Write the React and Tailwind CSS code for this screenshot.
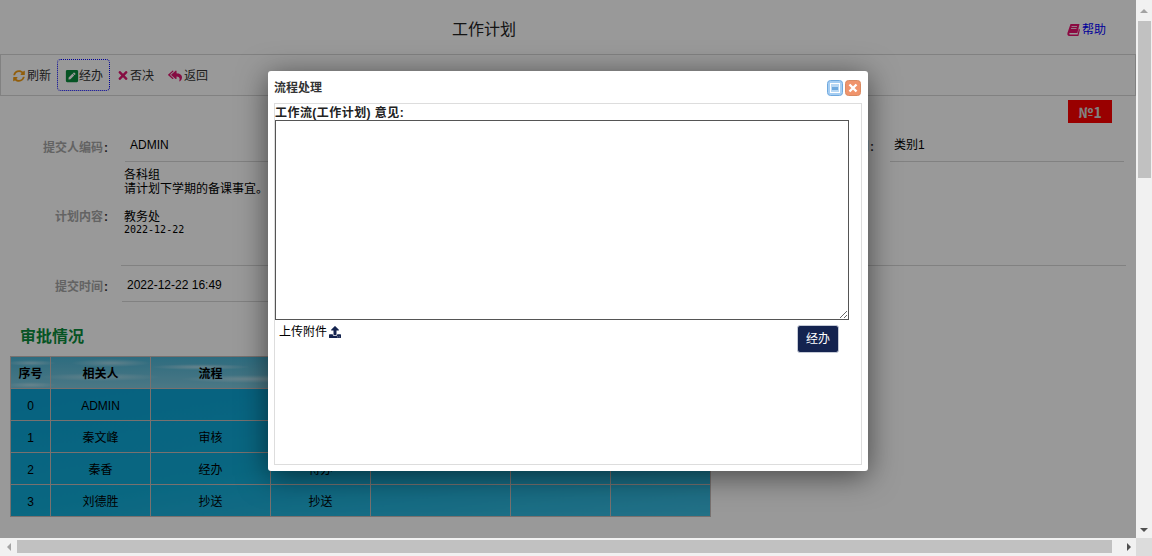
import { FaSyncAlt, FaPenSquare, FaTimes, FaReplyAll, FaUpload } from 'react-icons/fa';

const rows = [
  ['0', 'ADMIN', '', '', '', '', ''],
  ['1', '秦文峰', '审核', '审核', '', '', ''],
  ['2', '秦香', '经办', '待办', '', '', ''],
  ['3', '刘德胜', '抄送', '抄送', '', '', ''],
];

const heads = ['序号', '相关人', '流程', '状态', '时间', '意见', '附件'];
const widths = ['w-[40px]', 'w-[100px]', 'w-[120px]', 'w-[100px]', 'w-[140px]', 'w-[100px]', 'w-[100px]'];

function Label({ children, className = 'w-[108px]' }) {
  return (
    <span className={`${className} shrink-0 text-right text-xs font-bold text-[#a6a6a6]`}>
      {children}
      <span className="pl-[1px] text-[#333]">:</span>
    </span>
  );
}

function BookIcon() {
  return (
    <svg width="13" height="14" viewBox="0 0 13 14" className="text-[#e8126e]">
      <path
        fill="currentColor"
        d="M3.5 1 H12.5 L10.4 10 H3 C2 10 1.9 11.6 3 11.6 H10.6 L11.8 6 L13 6.5 L11.4 13 H2.4 C0.6 13 0 11.6 0.5 9.8 Z"
      />
      <path d="M4.6 3.5 H10 M4 5.5 H9.5" stroke="#fff" strokeWidth="0.8" />
    </svg>
  );
}

function ApprovalTable() {
  return (
    <table className="ml-[10px] w-[701px] table-fixed border-collapse border border-[#c9bdb9] text-xs text-black bg-[linear-gradient(170deg,#0aa0d4,#10acd8_55%,#3cbce0)]">
      <thead>
        <tr className="h-[32px] bg-[radial-gradient(ellipse_40px_4px_at_100px_6px,#ffffff70,transparent),radial-gradient(ellipse_50px_3px_at_190px_10px,#ffffff80,transparent),radial-gradient(ellipse_45px_4px_at_300px_5px,#ffffff70,transparent),radial-gradient(ellipse_60px_4px_at_90px_20px,#ffffff60,transparent),radial-gradient(ellipse_70px_4px_at_240px_22px,#ffffff70,transparent),radial-gradient(ellipse_60px_4px_at_420px_10px,#ffffff60,transparent),radial-gradient(ellipse_60px_4px_at_560px_22px,#ffffff60,transparent),radial-gradient(ellipse_25px_3px_at_20px_6px,#ffffff70,transparent),radial-gradient(ellipse_25px_3px_at_20px_28px,#ffffff60,transparent),linear-gradient(#4cb4d4,#80c8de)]">
          {heads.map((h, i) => (
            <th key={h} className={`${widths[i]} border border-[#c9bdb9] pt-[3px] font-bold`}>{h}</th>
          ))}
        </tr>
      </thead>
      <tbody>
        {rows.map((row) => (
          <tr key={row[0]} className="h-[32px]">
            {row.map((cell, i) => (
              <td key={i} className="border border-[#c9bdb9] pt-[2px] text-center">{cell}</td>
            ))}
          </tr>
        ))}
      </tbody>
    </table>
  );
}

function WindowButtons() {
  return (
    <div className="flex gap-[2px]">
      <svg width="16" height="16" viewBox="0 0 16 16">
        <rect x="0.5" y="0.5" width="15" height="15" rx="3" fill="#a5cdf2" stroke="#6fa9de" />
        <rect x="3.5" y="3.5" width="9" height="9" fill="#b9d8f4" stroke="#fff" />
        <rect x="5" y="7" width="6" height="3" fill="#6fa9de" />
      </svg>
      <svg width="16" height="16" viewBox="0 0 16 16">
        <rect x="0.5" y="0.5" width="15" height="15" rx="3" fill="#f0946c" stroke="#d98a62" />
        <path d="M4.5 4.5 L11.5 11.5 M11.5 4.5 L4.5 11.5" stroke="#fff" strokeWidth="2.4" />
      </svg>
    </div>
  );
}

function Modal() {
  return (
    <div className="absolute left-[268px] top-[71px] z-20 flex h-[400px] w-[600px] flex-col rounded-[3px] bg-white px-[6px] pb-[6px] text-xs shadow-[0_5px_30px_rgba(0,0,0,0.55)]">
      <div className="flex h-[32px] shrink-0 items-center justify-between pt-[1px] pr-[1px]">
        <span className="font-bold text-[#333]">流程处理</span>
        <WindowButtons />
      </div>
      <div className="flex-1 border border-[#dddddd]">
        <div className="h-[16px] pt-[2px] leading-[14px] font-bold text-[#222] tracking-[0.45px]">工作流(工作计划) 意见:</div>
        <textarea className="block h-[200px] w-[574px] resize border border-[#555] bg-white" />
        <div className="flex items-start justify-between pt-[5px] pr-[22px] pl-[4px]">
          <span className="flex items-center gap-[2px] leading-[14px] text-black">
            上传附件
            <FaUpload className="size-[12px] text-[#14234f]" />
          </span>
          <button className="h-[28px] w-[42px] rounded-[3px] border border-[#c5cad6] bg-[#14234f] text-xs text-white">经办</button>
        </div>
      </div>
    </div>
  );
}

function VerticalScrollbar() {
  return (
    <div className="flex w-[16px] shrink-0 flex-col bg-[#f1f1f1]">
      <div className="flex h-[21px] items-center justify-center text-[#a3a3a3]">
        <div className="size-0 border-x-[4px] border-b-[4px] border-x-transparent border-b-current" />
      </div>
      <div className="ml-[2px] h-[157px] w-[13px] bg-[#c1c1c1]" />
      <div className="flex-1" />
      <div className="flex h-[17px] items-center justify-center text-[#505050]">
        <div className="size-0 border-x-[4px] border-t-[4px] border-x-transparent border-t-current" />
      </div>
    </div>
  );
}

function HorizontalScrollbar() {
  return (
    <div className="flex h-[18px] shrink-0 bg-[#f1f1f1]">
      <div className="flex w-[17px] items-center justify-center text-[#a3a3a3]">
        <div className="size-0 border-y-[4px] border-r-[4px] border-y-transparent border-r-current" />
      </div>
      <div className="my-[2px] h-[13px] w-[1095px] bg-[#c1c1c1]" />
      <div className="flex flex-1 items-center justify-end pr-[5px] text-[#505050]">
        <div className="size-0 border-y-[4px] border-l-[4px] border-y-transparent border-l-current" />
      </div>
      <div className="w-[16px] bg-[#dcdcdc]" />
    </div>
  );
}

export default function App() {
  return (
    <div className="relative flex h-[556px] w-[1152px] flex-col overflow-hidden bg-white font-['Liberation_Sans','Noto_Sans_CJK_SC',sans-serif]">
      <div className="flex min-h-0 flex-1">
        <div className="relative min-w-0 flex-1 overflow-hidden pt-[4px]">
          {/* page behind the dialog */}
          <div className="flex h-[51px] items-center border-b border-[#d8d8d8] pt-[2px]">
            <h1 className="ml-[452px] text-base text-[#222]">工作计划</h1>
            <a className="mr-[30px] ml-auto flex items-center gap-[2px] text-xs text-[#0000ff]">
              <BookIcon />
              帮助
            </a>
          </div>
          <div className="flex h-[41px] items-center border-x border-b border-[#d8d8d8] pl-[12px] text-xs text-[#333]">
            <button className="flex items-center gap-[2px] pt-[1px]">
              <FaSyncAlt className="size-[12px] text-[#f39c12]" />
              刷新
            </button>
            <button className="ml-[6px] flex h-[32px] w-[53px] items-center rounded-[4px] border border-dotted border-[#0000ff] pt-[1px] pl-[7px]">
              <FaPenSquare className="size-[14px] text-[#0b8c3c]" />
              经办
            </button>
            <button className="ml-[8px] flex items-center gap-[2px] pt-[1px]">
              <FaTimes className="h-[13px] w-[10px] text-[#e0146e]" />
              否决
            </button>
            <button className="ml-[14px] flex items-center gap-[2px] pt-[1px]">
              <FaReplyAll className="size-[14px] text-[#e0146e]" />
              返回
            </button>
          </div>

          <div className="flex justify-end pt-[4px] pr-[24px]">
            <span className="flex h-[23px] w-[44px] items-center justify-center bg-[#ff0000] font-['Noto_Sans_CJK_SC'] text-sm font-bold text-[#d8d8d8]">№1</span>
          </div>

          <div className="flex h-[39px] items-center pt-[8px]">
            <Label className="w-[108px] pt-[3px]">提交人编码</Label>
            <div className="ml-[17px] flex h-full w-[660px] items-center border-b border-[#d8d8d8] pb-[3px] pl-[5px] text-xs text-black">ADMIN</div>
            <Label className="w-[89px]">计划类别</Label>
            <div className="ml-[16px] flex h-full w-[234px] items-center border-b border-[#d8d8d8] pb-[3px] pl-[4px] text-xs text-black">类别1</div>
          </div>

          <div className="flex h-[104px] items-center">
            <Label className="w-[108px] pt-[6px]">计划内容</Label>
            <div className="mr-[10px] ml-[13px] h-full flex-1 border-b border-[#d8d8d8] pt-[6px] pl-[3px] text-xs leading-[14px] text-black">
              <p>各科组</p>
              <p>请计划下学期的备课事宜。</p>
              <p className="h-[14px]" />
              <p>教务处</p>
              <p className="-mt-[1px] font-['DejaVu_Sans_Mono'] text-[10px]">2022-12-22</p>
            </div>
          </div>

          <div className="flex h-[36px] items-center">
            <Label className="w-[108px] pt-[6px]">提交时间</Label>
            <div className="ml-[14px] flex h-full w-[400px] items-center border-b border-[#d8d8d8] pt-[3px] pl-[5px] text-xs text-black">2022-12-22 16:49</div>
          </div>

          <h2 className="ml-[20px] flex h-[54px] items-center pt-[16px] text-base font-bold text-[#0b8c3c]">审批情况</h2>
          <ApprovalTable />

          {/* dim layer */}
          <div className="absolute inset-0 z-10 bg-black/40" />
        </div>
        <VerticalScrollbar />
      </div>
      <HorizontalScrollbar />
      <Modal />
    </div>
  );
}
